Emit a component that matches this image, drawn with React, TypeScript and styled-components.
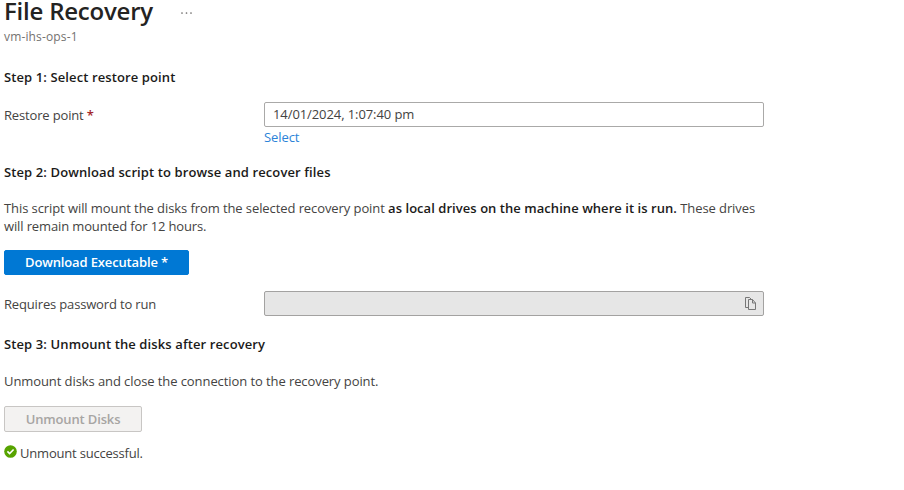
import React from 'react';
import styled, { createGlobalStyle } from 'styled-components';

const Global = createGlobalStyle`
  * { box-sizing: border-box; }
  body {
    margin: 0;
    background: #fff;
    color: #444342;
    font: 13px/18px "Open Sans", "Noto Sans", sans-serif;
    letter-spacing: -0.085px;
  }
`;

const Page = styled.main`
  height: 490px;
  overflow: hidden;
  padding-left: 4px;
  display: flex;
  flex-direction: column;
  align-items: flex-start;
`;

const Header = styled.header`
  display: flex;
  height: 27px;
  align-items: flex-start;
  gap: 27px;
`;

const Title = styled.h1`
  margin: 0;
  font-size: 24px;
  line-height: 22px;
  font-weight: 600;
  letter-spacing: -0.22px;
  white-space: nowrap;
  color: #242322;
`;

const More = styled.svg`
  margin-top: 11px;
  fill: #6b6968;
`;

const Subtitle = styled.div`
  padding-top: 1px;
  height: 18px;
  font-size: 12px;
  letter-spacing: 0.15px;
  color: #747270;
`;

const Heading = styled.h2<{ $top: number }>`
  margin: ${p => p.$top}px 0 0;
  height: 18px;
  font-size: 13px;
  line-height: 18px;
  font-weight: 600;
  letter-spacing: 0.11px;
  white-space: nowrap;
  color: #1b1a19;
`;

const Text = styled.p<{ $top: number; $track?: number }>`
  margin: ${p => p.$top}px 0 0;
  height: 18px;
  white-space: nowrap;
  letter-spacing: ${p => p.$track ?? -0.085}px;
`;

const Strong = styled.strong`
  font-weight: 600;
  letter-spacing: 0.05px;
  color: #1b1a19;
`;

const Row = styled.div<{ $top: number }>`
  display: flex;
  align-items: center;
  margin-top: ${p => p.$top}px;
  height: 25px;
`;

const Label = styled.label`
  width: 260px;
  padding-top: 1px;
  letter-spacing: -0.16px;
`;

const Star = styled.span`
  color: #a4262c;
  font-weight: 600;
`;

const Field = styled.div<{ $disabled?: boolean }>`
  width: 500px;
  height: 25px;
  border: 1px solid ${p => (p.$disabled ? '#a3a2a1' : '#aaa9a8')};
  border-radius: 2px;
  padding: ${p => (p.$disabled ? '0 6px 0 8px' : '0 6px 2px 8px')};
  display: flex;
  align-items: center;
  justify-content: ${p => (p.$disabled ? 'flex-end' : 'flex-start')};
  background: ${p => (p.$disabled ? '#e6e6e6' : '#fff')};
`;

const Link = styled.a`
  margin: 1px 0 0 260px;
  height: 18px;
  color: #2b83d8;
`;

const Button = styled.button<{ $primary?: boolean }>`
  margin-top: ${p => (p.$primary ? 15 : 16)}px;
  width: ${p => (p.$primary ? 185 : 138)}px;
  height: ${p => (p.$primary ? 25 : 26)}px;
  padding: ${p => (p.$primary ? '0 0 2px' : '0')};
  border: 1px solid ${p => (p.$primary ? '#0078d4' : '#c8c6c4')};
  border-radius: 2px;
  background: ${p => (p.$primary ? '#0078d4' : '#f3f2f1')};
  color: ${p => (p.$primary ? '#fff' : '#a7a5a3')};
  font: 600 13px/18px "Open Sans", "Noto Sans", sans-serif;
  letter-spacing: -0.14px;
  white-space: nowrap;
`;

const Status = styled.div`
  display: flex;
  align-items: flex-start;
  gap: 3px;
  margin-top: 12px;
  height: 18px;
  letter-spacing: -0.2px;
`;

const StatusIcon = styled.svg`
  margin-top: 1px;
`;

const CopyIcon = () => (
  <svg width="12" height="13" viewBox="0 0 12 13" fill="none" stroke="#777" strokeWidth="1">
    <path d="M3.5 10.5h-3V.5h4l1.5 1.5" />
    <path d="M3.5 2.5h4l3 3.5v6.5h-7zM7.5 2.5V6h3" />
  </svg>
);

export default function App() {
  return (
    <>
      <Global />
      <Page>
        <Header>
          <Title>File Recovery</Title>
          <More width="14" height="4">
            <circle cx="2" cy="2" r=".85" />
            <circle cx="6.5" cy="2" r=".85" />
            <circle cx="11" cy="2" r=".85" />
          </More>
        </Header>
        <Subtitle>vm-ihs-ops-1</Subtitle>
        <Heading $top={23}>Step 1: Select restore point</Heading>
        <Row $top={16}>
          <Label>Restore point <Star>*</Star></Label>
          <Field>14/01/2024, 1:07:40 pm</Field>
        </Row>
        <Link>Select</Link>
        <Heading $top={17}>Step 2: Download script to browse and recover files</Heading>
        <Text $top={18}>
          This script will mount the disks from the selected recovery point{' '}
          <Strong>as local drives on the machine where it is run.</Strong> These drives
        </Text>
        <Text $top={0} $track={-0.13}>will remain mounted for 12 hours.</Text>
        <Button $primary>Download Executable *</Button>
        <Row $top={16}>
          <Label>Requires password to run</Label>
          <Field $disabled><CopyIcon /></Field>
        </Row>
        <Heading $top={19}>Step 3: Unmount the disks after recovery</Heading>
        <Text $top={19}>Unmount disks and close the connection to the recovery point.</Text>
        <Button disabled>Unmount Disks</Button>
        <Status>
          <StatusIcon width="13" height="13" viewBox="0 0 13 13">
            <circle cx="6.5" cy="6.5" r="6.3" fill="#57a300" />
            <path d="M3.4 6.4l2.2 2.2 4-4.1" fill="none" stroke="#fff" strokeWidth="1.6" />
          </StatusIcon>
          Unmount successful.
        </Status>
      </Page>
    </>
  );
}
